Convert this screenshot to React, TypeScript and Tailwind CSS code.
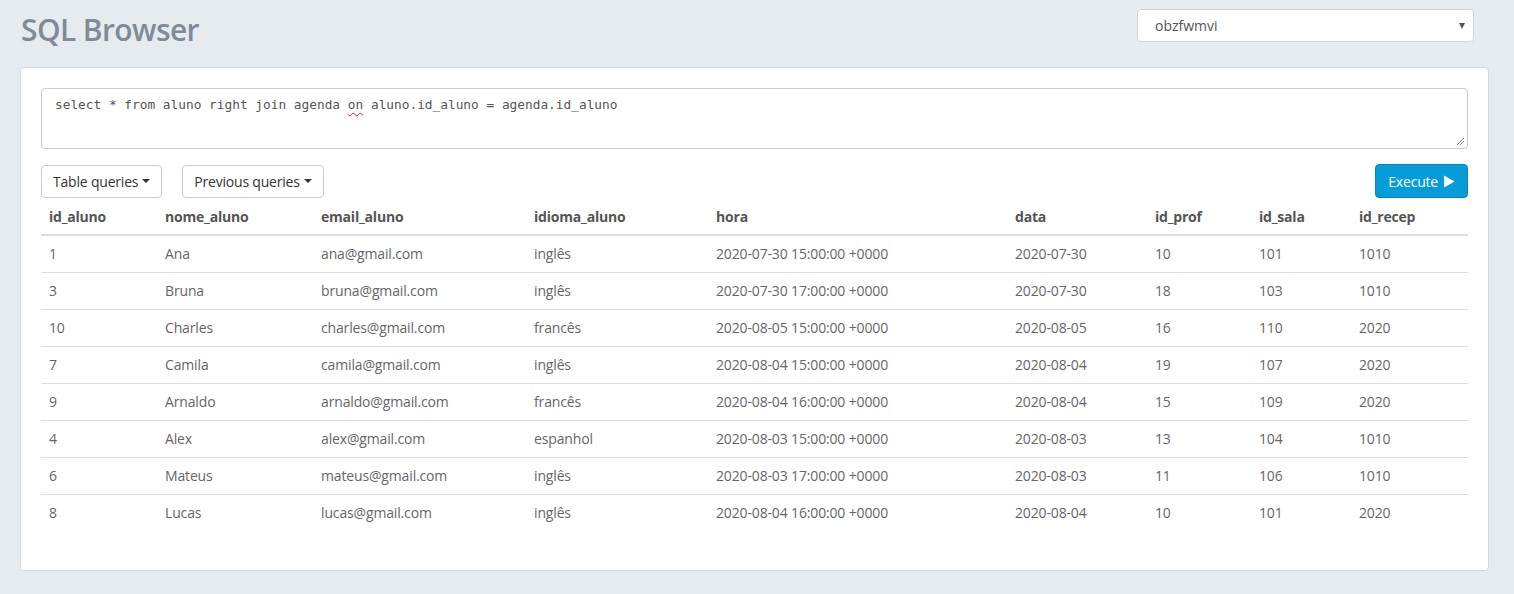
type Row = {
  id_aluno: string;
  nome_aluno: string;
  email_aluno: string;
  idioma_aluno: string;
  hora: string;
  data: string;
  id_prof: string;
  id_sala: string;
  id_recep: string;
};

const columns: { key: keyof Row; w: string }[] = [
  { key: "id_aluno", w: "w-[116px]" },
  { key: "nome_aluno", w: "w-[156px]" },
  { key: "email_aluno", w: "w-[213px]" },
  { key: "idioma_aluno", w: "w-[182px]" },
  { key: "hora", w: "w-[299px]" },
  { key: "data", w: "w-[140px]" },
  { key: "id_prof", w: "w-[104px]" },
  { key: "id_sala", w: "w-[100px]" },
  { key: "id_recep", w: "w-[117px]" },
];

const r = (
  id_aluno: string,
  nome_aluno: string,
  idioma_aluno: string,
  hora: string,
  id_prof: string,
  id_sala: string,
  id_recep: string
): Row => ({
  id_aluno,
  nome_aluno,
  email_aluno: `${nome_aluno.toLowerCase()}@gmail.com`,
  idioma_aluno,
  hora: `${hora} +0000`,
  data: hora.slice(0, 10),
  id_prof,
  id_sala,
  id_recep,
});

const rows: Row[] = [
  r("1", "Ana", "inglês", "2020-07-30 15:00:00", "10", "101", "1010"),
  r("3", "Bruna", "inglês", "2020-07-30 17:00:00", "18", "103", "1010"),
  r("10", "Charles", "francês", "2020-08-05 15:00:00", "16", "110", "2020"),
  r("7", "Camila", "inglês", "2020-08-04 15:00:00", "19", "107", "2020"),
  r("9", "Arnaldo", "francês", "2020-08-04 16:00:00", "15", "109", "2020"),
  r("4", "Alex", "espanhol", "2020-08-03 15:00:00", "13", "104", "1010"),
  r("6", "Mateus", "inglês", "2020-08-03 17:00:00", "11", "106", "1010"),
  r("8", "Lucas", "inglês", "2020-08-04 16:00:00", "10", "101", "2020"),
];

function Caret() {
  return (
    <span className="ml-[4px] inline-block h-0 w-0 border-x-[4px] border-t-[4px] border-x-transparent border-t-[#333] align-middle" />
  );
}

function DropButton({ label }: { label: string }) {
  return (
    <button className="flex h-[33px] items-center rounded-[4px] border border-[#cccccc] bg-white px-[11px] text-[14px] tracking-[-0.2px] text-[#333]">
      {label}
      <Caret />
    </button>
  );
}

export default function App() {
  return (
    <div className="min-h-[594px] bg-[#e6ebef] pl-[20px] pr-[25px] text-[#555] [font-family:'Open_Sans','Liberation_Sans',sans-serif]">
      {/* header */}
      <div className="flex h-[67px] items-start justify-between">
        <h1 className="mt-[12px] pl-[1px] text-[30px] font-semibold leading-[36px] tracking-[-0.6px] text-[#818a97]">
          SQL Browser
        </h1>
        <div className="relative mr-[15px] mt-[9px] flex h-[33px] w-[337px] items-center rounded-[4px] border border-[#cfd5db] bg-white pl-[17px] text-[14px] text-[#555]">
          obzfwmvi
          <span className="absolute right-[8px] top-[13px] h-0 w-0 border-x-[3.5px] border-t-[6px] border-x-transparent border-t-[#555]" />
        </div>
      </div>

      {/* panel */}
      <div className="rounded-[4px] border border-[#d2dbe3] bg-white px-[20px] pb-[39px] pt-[20px]">
        <div className="relative h-[61px] rounded-[4px] border border-[#cccccc] px-[13px] py-[7px] text-[12.8px] leading-[18px] text-[#555] [font-family:'DejaVu_Sans_Mono',monospace]">
          select * from aluno right join agenda{" "}
          <span className="underline decoration-[#e02020] decoration-wavy decoration-1 underline-offset-[3px]">on</span>{" "}
          aluno.id_aluno = agenda.id_aluno
          <svg className="absolute bottom-[2px] right-[2px]" width="9" height="9" viewBox="0 0 9 9">
            <path d="M1 8L8 1M4 8L8 4" stroke="#888" strokeWidth="1" />
          </svg>
        </div>

        <div className="mt-[15px] flex items-center">
          <DropButton label="Table queries" />
          <div className="ml-[20px]">
            <DropButton label="Previous queries" />
          </div>
          <button className="ml-auto flex h-[34px] items-center rounded-[4px] border border-[#0586bd] bg-[#069bd9] px-[12px] text-[14px] tracking-[-0.2px] text-white">
            Execute
            <svg className="ml-[5px]" width="12" height="13" viewBox="0 0 12 13">
              <path d="M1 0.5L11.5 6.5L1 12.5Z" fill="white" />
            </svg>
          </button>
        </div>

        <table className="mt-[1px] w-full table-fixed border-collapse text-[14px]">
          <thead>
            <tr className="border-b-2 border-[#dddddd]">
              {columns.map((c) => (
                <th key={c.key} className={`${c.w} h-[36px] px-[8px] text-left align-middle font-bold tracking-[-0.2px] text-[#555]`}>
                  {c.key}
                </th>
              ))}
            </tr>
          </thead>
          <tbody>
            {rows.map((row, i) => (
              <tr key={row.id_aluno} className={i === 0 ? "" : "border-t border-[#dddddd]"}>
                {columns.map((c) => (
                  <td key={c.key} className="h-[37px] px-[8px] align-middle tracking-[-0.15px] text-[#666]">
                    {row[c.key]}
                  </td>
                ))}
              </tr>
            ))}
          </tbody>
        </table>
      </div>
    </div>
  );
}
